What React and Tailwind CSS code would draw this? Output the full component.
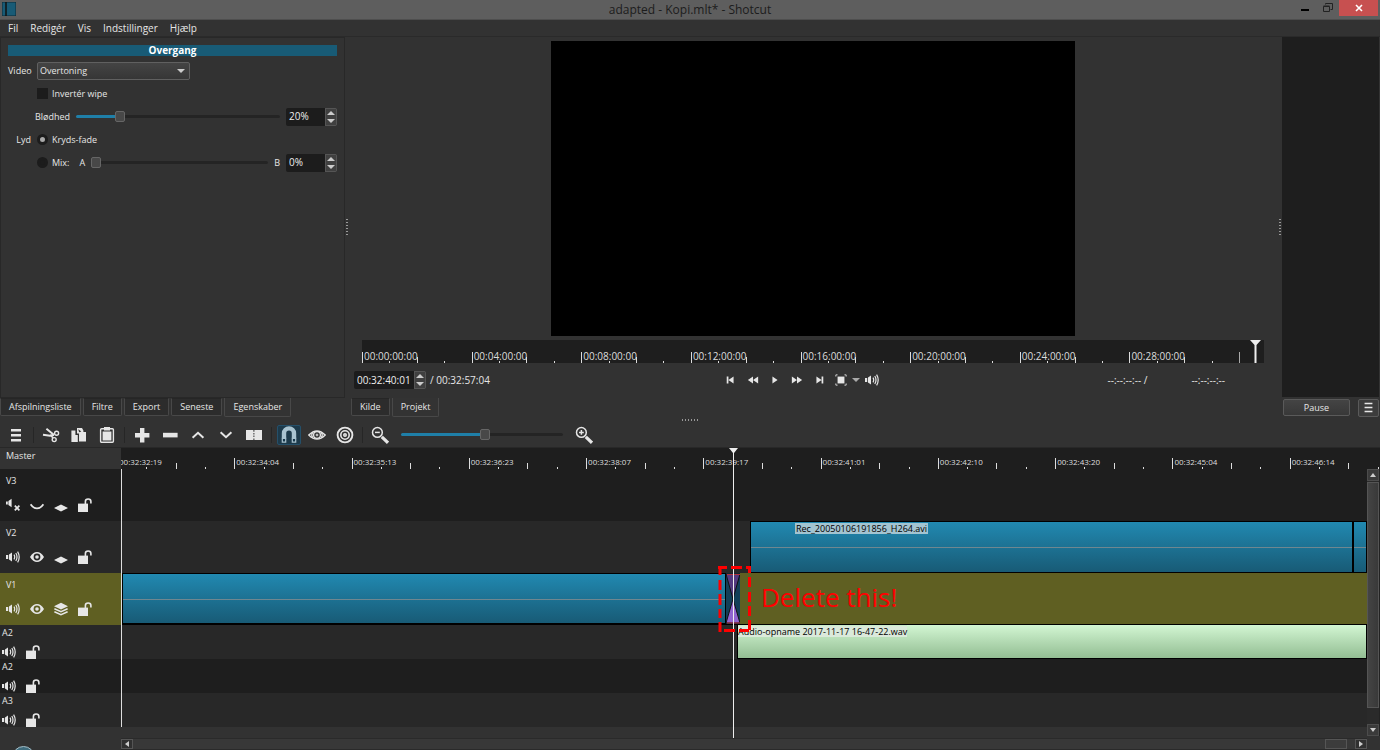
import { useState } from 'react';
import clsx from 'clsx';

const sourceMarks = ['00:00:00:00', '00:04:00:00', '00:08:00:00', '00:12:00:00', '00:16:00:00', '00:20:00:00', '00:24:00:00', '00:28:00:00'];

const timelineMarks = [
  '00:32:32:19', '00:32:34:04', '00:32:35:13', '00:32:36:23', '00:32:38:07', '00:32:39:17',
  '00:32:41:01', '00:32:42:10', '00:32:43:20', '00:32:45:04', '00:32:46:14',
];

const videoTracks = [
  { id: 'v3', name: 'V3', muted: true, hidden: true, composite: false, bg: 'bg-[#1e1e1e]' },
  { id: 'v2', name: 'V2', muted: false, hidden: false, composite: false, bg: 'bg-[#282828]' },
  { id: 'v1', name: 'V1', muted: false, hidden: false, composite: true, bg: 'bg-[#5f5f22]' },
];

const audioTracks = [
  { id: 'a1', name: 'A2', bg: 'bg-[#282828]' },
  { id: 'a2', name: 'A2', bg: 'bg-[#1e1e1e]' },
  { id: 'a3', name: 'A3', bg: 'bg-[#282828]' },
];

function Icon({ size = 14, box = 14, children }) {
  return (
    <svg width={size} height={size} viewBox={`0 0 ${box} ${box}`} fill="currentColor" aria-hidden="true" className="block shrink-0">
      {children}
    </svg>
  );
}

const stroke = { fill: 'none', stroke: 'currentColor' };

const SpeakerIcon = () => (
  <Icon>
    <path d="M0 5h2.2v4H0zM3 4.6 6 2.4v9.2L3 9.4z" />
    <path d="M8 4.6q1.4 2.4 0 4.8M9.8 3q2.4 4 0 8M11.6 1.6q3.2 5.4 0 10.8" {...stroke} strokeWidth="1.2" />
  </Icon>
);

const MutedIcon = () => (
  <Icon>
    <path d="M0 3.4h1.8v3.2H0zM2.4 3 5.6.8v8.4L2.4 7z" />
    <path d="m8.8 7.6 4.6 4.8m0-4.8-4.6 4.8" {...stroke} strokeWidth="1.7" />
  </Icon>
);

const EyeIcon = () => (
  <Icon>
    <path fillRule="evenodd" d="M0 7q3-5 7-5t7 5q-3 5-7 5T0 7zm7-3.4a3.4 3.4 0 1 0 0 6.8 3.4 3.4 0 0 0 0-6.8z" />
    <circle cx="7" cy="7" r="1.8" />
  </Icon>
);

const ClosedEyeIcon = () => (
  <Icon>
    <path d="M.6 6.2q6.4 8.4 12.8 0" {...stroke} strokeWidth="1.8" />
  </Icon>
);

const LayerIcon = () => (
  <Icon>
    <path d="M0 10 7 6.4 14 10l-7 3.6z" />
  </Icon>
);

const LayersIcon = () => (
  <Icon>
    <path d="M0 4.2 7 .8l7 3.4-7 3.4z" />
    <path d="m.4 6.8 6.6 3 6.6-3M.4 9.8l6.6 3 6.6-3" {...stroke} strokeWidth="1.5" />
  </Icon>
);

const LockIcon = () => (
  <Icon>
    <path d="M0 5.6h10V14H0z" />
    <path d="M7.4 6V3.4a2.7 2.4 0 0 1 5.5 0v2.2" {...stroke} strokeWidth="1.6" />
  </Icon>
);

const MenuIcon = ({ size = 14 }) => (
  <Icon size={size}>
    <path d="M2 1h10v2H2zM2 6h10v2H2zM2 11h10v2H2z" />
  </Icon>
);

const toolGroups = [
  [{ label: 'Menu', art: <path d="M4 3h10v2.4H4zM4 8h10v2.4H4zM4 13h10v2.4H4z" /> }],
  [
    {
      label: 'Klip',
      art: (
        <g fill="none" stroke="currentColor">
          <path d="m4.4 2.8 7.4 6M1 8.8l7 1 4-.8" strokeWidth="2" />
          <circle cx="14.6" cy="7.2" r="2" strokeWidth="1.4" />
          <circle cx="12.2" cy="13.6" r="2" strokeWidth="1.4" />
          <path d="m8.5 8.6 2.6 3.6" strokeWidth="1.6" />
        </g>
      ),
    },
    {
      label: 'Kopiér',
      art: <path fillRule="evenodd" d="M1.4 4.6h4V9h2.4v7H1.4zM7 2h5l1.4 2.4V6H16v9.6H9V7.4H7zm1.2 1.2 1 3 2.2-.6z" />,
    },
    {
      label: 'Sæt ind',
      art: (
        <g>
          <rect x="2.6" y="2.8" width="12.8" height="13.4" rx="1" {...stroke} strokeWidth="1.4" />
          <path d="M4.6 5.6h8.8v8.8H4.6zM6 1h6v3.6H6z" />
        </g>
      ),
    },
  ],
  [
    { label: 'Tilføj', art: <path d="M7 2h4.4v5h5v4.4h-5v5H7v-5H2V7h5z" /> },
    { label: 'Fjern', art: <path d="M2 6.8h14.6v4.6H2z" /> },
    { label: 'Løft', art: <path d="m3.6 11.8 5.4-5 5.4 5" {...stroke} strokeWidth="2" /> },
    { label: 'Overskriv', art: <path d="m3.6 6.2 5.4 5 5.4-5" {...stroke} strokeWidth="2" /> },
    { label: 'Split', art: <path d="M1 4h7.4v1.8h1V4H17v10H9.4v-1.6h-1V14H1zm7.4 3v1.4h1V7zm0 2.6V11h1V9.6z" fillRule="evenodd" /> },
  ],
  [
    {
      label: 'Snap',
      active: true,
      art: (
        <g>
          <path d="M4 12.5V7.4a5 5 0 0 1 10 0V12.5" {...stroke} strokeWidth="4.4" />
          <path d="M2.3 12.4h3.4v3.8H2.3zM12.3 12.4h3.4v3.8h-3.4z" fill="#16374a" stroke="currentColor" strokeWidth="1.2" />
        </g>
      ),
    },
    {
      label: 'Skrub',
      art: (
        <g fill="none" stroke="currentColor">
          <path d="M.8 9Q9 .8 17.2 9 9 17.2.8 9z" strokeWidth="1.4" />
          <circle cx="9" cy="9" r="3.4" strokeWidth="1.3" />
          <circle cx="9" cy="9" r=".9" />
          <path d="M4.6 6.6Q2.8 9 4.6 11.4M13.4 6.6q1.8 2.4 0 4.8" strokeWidth="1.2" />
        </g>
      ),
    },
    {
      label: 'Ripple',
      art: (
        <g fill="none" stroke="currentColor">
          <circle cx="9" cy="9" r="7.4" strokeWidth="1.9" />
          <circle cx="9" cy="9" r="4.2" strokeWidth="1.6" />
          <circle cx="9" cy="9" r="1.2" strokeWidth="1.6" />
        </g>
      ),
    },
  ],
  [
    {
      label: 'Zoom ud',
      art: (
        <g fill="none" stroke="currentColor">
          <circle cx="6.4" cy="6.4" r="4.9" strokeWidth="1.5" />
          <path d="M4 6.4h4.8" strokeWidth="1.5" />
          <path d="m10.8 10.8 6.2 6" strokeWidth="3.2" />
        </g>
      ),
    },
  ],
];

const zoomInArt = (
  <g fill="none" stroke="currentColor">
    <circle cx="6.4" cy="6.4" r="4.9" strokeWidth="1.5" />
    <path d="M4 6.4h4.8M6.4 4v4.8" strokeWidth="1.5" />
    <path d="m10.8 10.8 6.2 6" strokeWidth="3.2" />
  </g>
);

function ToolButton({ label, active, children }) {
  return (
    <button
      type="button"
      aria-label={label}
      className="flex h-6 w-7 items-center justify-center"
    >
      <span className={clsx('flex h-5 w-6 items-center justify-center rounded-xs', active && 'border border-[#25506a] bg-[#1d3a4b] text-[#a9c3d0]')}>
        <Icon size={18} box={18}>{children}</Icon>
      </span>
    </button>
  );
}

function Slider({ label, value, onChange, className }) {
  return (
    <input
      type="range"
      aria-label={label}
      value={value}
      onChange={(e) => onChange(Number(e.target.value))}
      style={{ backgroundImage: `linear-gradient(to right, #1f7fa8 ${value}%, #242424 ${value}%)` }}
      className={clsx(
        'h-[3px] min-w-0 appearance-none rounded-sm [&::-webkit-slider-thumb]:h-[11px] [&::-webkit-slider-thumb]:w-[10px] [&::-webkit-slider-thumb]:appearance-none [&::-webkit-slider-thumb]:rounded-xs [&::-webkit-slider-thumb]:border [&::-webkit-slider-thumb]:border-[#666] [&::-webkit-slider-thumb]:bg-[#484848]',
        className,
      )}
    />
  );
}

function SpinBox({ label, defaultValue, className }) {
  return (
    <div className={clsx('flex h-[18px] shrink-0 overflow-hidden rounded-xs bg-[#1c1c1c]', className)}>
      <input type="text" aria-label={label} defaultValue={defaultValue} className="w-full min-w-0 bg-transparent pl-[3px] text-[10px] text-[#eee]" />
      <div className="flex w-[12px] shrink-0 flex-col border border-[#555] bg-[#404040]">
        <button type="button" aria-label={`${label} op`} className="flex flex-1 items-center justify-center">
          <svg width="8" height="4" viewBox="0 0 8 4" fill="#ccc"><path d="M0 4h8L4 0z" /></svg>
        </button>
        <button type="button" aria-label={`${label} ned`} className="flex flex-1 items-center justify-center">
          <svg width="8" height="4" viewBox="0 0 8 4" fill="#ccc"><path d="M0 0h8L4 4z" /></svg>
        </button>
      </div>
    </div>
  );
}

function RulerCell({ label, small }) {
  return (
    <div className="relative grid min-w-0 flex-1 grid-cols-4 items-end">
      <i className="h-[11px] w-px bg-[#ddd]" />
      <i className="h-[2px] w-px bg-[#ddd]" />
      <i className="h-[6px] w-px bg-[#ddd]" />
      <i className="h-[2px] w-px bg-[#ddd]" />
      <span className={clsx('absolute bottom-px left-[2px] leading-3 whitespace-nowrap text-[#ddd]', small ? 'text-[8px]' : 'text-[10px]')}>{label}</span>
    </div>
  );
}

function Tabs({ items, current }) {
  return (
    <div role="tablist" className="flex h-5 items-start gap-[2px]">
      {items.map((name) => (
        <button
          key={name}
          type="button"
          role="tab"
          aria-selected={name === current}
          className={clsx(
            'rounded-b-xs border-x border-b border-[#484848] px-2 text-[9px]',
            name === current ? 'h-[19px] bg-[#333]' : 'h-[18px] border-t border-t-[#262626] bg-[#2c2c2c]',
          )}
        >
          {name}
        </button>
      ))}
    </div>
  );
}

function Grip({ vertical }) {
  return (
    <div className={clsx('flex shrink-0 items-center justify-center gap-px', vertical && 'flex-col')}>
      {[0, 1, 2, 3, 4, 5].map((n) => (
        <i key={n} className={clsx('bg-[#999]', vertical ? 'mb-px h-px w-[2px]' : 'mr-px h-[2px] w-px')} />
      ))}
    </div>
  );
}

function Properties() {
  const [softness, setSoftness] = useState(20);
  const [mix, setMix] = useState(0);

  return (
    <section className="flex w-[345px] shrink-0 flex-col">
      <div className="flex-1 border border-[#282828] px-[7px] pt-[7px]">
        <h2 className="bg-[#185b76] text-center text-[10px] leading-[11px] font-bold text-white">Overgang</h2>
        <div className="mt-[3px] text-[9px]">
          <div className="flex h-[23px] items-center">
            <label htmlFor="video" className="w-[23px] text-right">Video</label>
            <div className="relative ml-[6px]">
              <select id="video" defaultValue="Overtoning" className="block h-[18px] w-[153px] appearance-none rounded-xs border border-[#606060] bg-linear-to-b from-[#444] to-[#363636] px-[2px]">
                <option>Overtoning</option>
              </select>
              <svg width="8" height="4" viewBox="0 0 8 4" fill="#ccc" className="pointer-events-none absolute top-[7px] right-[5px]"><path d="M0 0h8L4 4z" /></svg>
            </div>
          </div>
          <label className="flex h-[23px] items-center gap-1 pl-[29px]">
            <input type="checkbox" className="size-[11px] appearance-none bg-[#1c1c1c] checked:bg-[#888]" />
            Invertér wipe
          </label>
          <div className="flex h-[23px] items-center gap-[6px]">
            <span className="w-[62px] text-right">Blødhed</span>
            <Slider label="Blødhed" value={softness} onChange={setSoftness} className="flex-1" />
            <SpinBox label="Blødhed procent" defaultValue="20%" className="w-[51px]" />
          </div>
          <div className="flex h-[23px] items-center">
            <span className="w-[23px] text-right">Lyd</span>
            <label className="ml-[6px] flex items-center gap-1">
              <input type="radio" name="lyd" defaultChecked className="size-[11px] appearance-none rounded-full border-[3px] border-[#1c1c1c] bg-[#1c1c1c] checked:bg-[#aaa]" />
              Kryds-fade
            </label>
          </div>
          <div className="flex h-[23px] items-center gap-[6px] pl-[29px]">
            <label className="flex items-center gap-1 pr-1">
              <input type="radio" name="lyd" className="size-[11px] appearance-none rounded-full border-[3px] border-[#1c1c1c] bg-[#1c1c1c] checked:bg-[#aaa]" />
              Mix:
            </label>
            <span>A</span>
            <Slider label="Mix" value={mix} onChange={setMix} className="flex-1" />
            <span>B</span>
            <SpinBox label="Mix procent" defaultValue="0%" className="w-[51px]" />
          </div>
        </div>
      </div>
      <Tabs items={['Afspilningsliste', 'Filtre', 'Export', 'Seneste', 'Egenskaber']} current="Egenskaber" />
    </section>
  );
}

const transport = [
  { label: 'Forrige', d: 'M2 3h2v8H2zM10 3v8L4 7z' },
  { label: 'Spol tilbage', d: 'M7 3v8L1 7zM13 3v8L7 7z' },
  { label: 'Afspil', d: 'M4 3v8l6-4z' },
  { label: 'Spol frem', d: 'M1 3v8l6-4zM7 3v8l6-4z' },
  { label: 'Næste', d: 'M4 3v8l6-4zM10 3h2v8h-2z' },
];

function Player() {
  return (
    <section className="flex min-w-0 flex-1 flex-col pt-1">
      <div className="flex min-h-0 flex-1 justify-center">
        <div className="aspect-video h-full bg-black" />
      </div>
      <div className="relative mx-[14px] mt-1 flex h-[23px] bg-[#1e1e1e]">
        {sourceMarks.map((m) => <RulerCell key={m} label={m} />)}
        <div className="flex w-[25px] items-end">
          <i className="h-[11px] w-px bg-[#aaa]" />
        </div>
        <svg width="11" height="23" viewBox="0 0 11 23" fill="#eee" className="absolute top-0 right-[3px]"><path d="M0 0h11L6.500 5v18h-2V5z" /></svg>
      </div>
      {/* equal outer columns keep the transport buttons centred */}
      <div className="mt-2 mr-[33px] ml-[6px] grid h-[18px] grid-cols-[1fr_auto_1fr] items-center text-[10px]">
        <div className="flex items-center gap-1">
          <SpinBox label="Position" defaultValue="00:32:40:01" className="w-[72px]" />
          <span>/ 00:32:57:04</span>
        </div>
        <div className="flex items-center">
          {transport.map((t) => (
            <button key={t.label} type="button" aria-label={t.label} className="flex w-[22px] justify-center">
              <Icon size={12}><path d={t.d} /></Icon>
            </button>
          ))}
          <button type="button" aria-label="Zoom" className="flex w-[22px] justify-center">
            <Icon size={12}>
              <path d="M3 3h8v8H3z" />
              <path d="M1 3V1h2M11 1h2v2M13 11v2h-2M3 13H1v-2" {...stroke} />
            </Icon>
          </button>
          <svg width="8" height="4" viewBox="0 0 8 4" fill="#aaa"><path d="M0 0h8L4 4z" /></svg>
          <button type="button" aria-label="Lydstyrke" className="ml-[5px]"><SpeakerIcon /></button>
        </div>
        <div className="flex justify-end gap-[44px] pr-5">
          <span>--:--:--:-- /</span>
          <span>--:--:--:--</span>
        </div>
      </div>
      <div className="mt-[9px] ml-[3px]">
        <Tabs items={['Kilde', 'Projekt']} current="Projekt" />
      </div>
    </section>
  );
}

function TrackButtons({ children }) {
  return (
    <div className="flex gap-[10px]">
      {children}
    </div>
  );
}

function TrackHeads() {
  return (
    <div className="flex w-[121px] shrink-0 flex-col overflow-hidden text-[9px] leading-3">
      <div className="h-[21px] bg-[#333] pt-[2px] pl-[6px]">Master</div>
      {videoTracks.map((t) => (
        <div key={t.id} className={clsx('flex h-[52px] flex-col justify-between pt-[6px] pb-[9px] pl-[6px]', t.bg)}>
          <span>{t.name}</span>
          <TrackButtons>
            <button type="button" aria-label="Lydløs">{t.muted ? <MutedIcon /> : <SpeakerIcon />}</button>
            <button type="button" aria-label="Skjul">{t.hidden ? <ClosedEyeIcon /> : <EyeIcon />}</button>
            <button type="button" aria-label="Sammensæt">{t.composite ? <LayersIcon /> : <LayerIcon />}</button>
            <button type="button" aria-label="Lås"><LockIcon /></button>
          </TrackButtons>
        </div>
      ))}
      {audioTracks.map((t) => (
        <div key={t.id} className={clsx('flex h-[34px] flex-col justify-between pt-[2px] pl-[2px]', t.bg)}>
          <span>{t.name}</span>
          <TrackButtons>
            <button type="button" aria-label="Lydløs"><SpeakerIcon /></button>
            <button type="button" aria-label="Lås"><LockIcon /></button>
          </TrackButtons>
        </div>
      ))}
      <div className="relative flex-1">
        <div className="absolute top-[19px] left-3 size-[23px] rounded-full border border-[#a5bcc5] bg-[#3f6c7d]" />
      </div>
    </div>
  );
}

function VideoClip({ label, className }) {
  return (
    <div className={clsx('relative border border-black bg-linear-to-b from-[#2189b1] to-[#185b76]', className)}>
      <div className="absolute inset-x-0 top-1/2 h-px bg-[#6f8790]" />
      {label && <span className="absolute top-px left-[44px] bg-[#a3c4d1] px-px text-[9px] leading-[11px] whitespace-nowrap text-black">{label}</span>}
    </div>
  );
}

function Lanes() {
  return (
    <div className="relative min-w-0 flex-1">
      <div className="h-[21px] overflow-hidden bg-[#1e1e1e]">
        <div className="-mr-[27px] -ml-1 flex h-full">
          {timelineMarks.map((m) => <RulerCell key={m} label={m} small />)}
        </div>
      </div>
      <div className="flex">
        <div className="min-w-0 flex-1 border-l border-[#ddd]">
          <div className="h-[52px] bg-[#1e1e1e]" />
          <div className="flex h-[52px] bg-[#282828] pl-[628px]">
            <VideoClip label="Rec_20050106191856_H264.avi" className="flex-1" />
            <VideoClip className="w-[14px]" />
          </div>
          <div className="flex h-[52px] border-b border-black bg-[#5f5f22]">
            <VideoClip className="w-[604px]" />
            <svg width="14" height="51" viewBox="0 0 14 51">
              <path d="M0 0h14v51H0z" fill="#123f58" />
              <path d="M0 1h14L7 26z" fill="#53397f" stroke="#111" />
              <path d="M0 50h14L7 26z" fill="#8f63cf" stroke="#111" />
              <path d="M1 1.500h13M1 50h13" stroke="#b3303a" />
            </svg>
          </div>
          <div className="flex h-[34px] bg-[#282828] pl-[615px]">
            <div className="flex-1 border border-t-0 border-black bg-linear-to-b from-[#d3f6d3] to-[#93be93]">
              <span className="block w-fit border-t border-[#c9ecc9] bg-[#dbe9db] text-[9px] leading-[11px] whitespace-nowrap text-black">Audio-opname 2017-11-17 16-47-22.wav</span>
            </div>
          </div>
          <div className="h-[34px] bg-[#1e1e1e]" />
          <div className="h-[34px] bg-[#282828]" />
        </div>
        <div className="-mb-[9px] flex w-[13px] flex-col border-r border-[#222] bg-[#2a2a2a]">
          <button type="button" aria-label="Rul op" className="flex h-3 items-center justify-center border border-[#4c4c4c] bg-[#3a3a3a]">
            <svg width="6" height="4" viewBox="0 0 6 4" fill="#ccc"><path d="M0 4h6L3 0z" /></svg>
          </button>
          <div className="mt-px mb-4 flex-1 border border-[#555] bg-linear-to-r from-[#444] to-[#393939]" />
          <button type="button" aria-label="Rul ned" className="flex h-3 items-center justify-center border border-[#4c4c4c] bg-[#3a3a3a]">
            <svg width="6" height="4" viewBox="0 0 6 4" fill="#ccc"><path d="M0 0h6L3 4z" /></svg>
          </button>
        </div>
      </div>
      <div className="mt-[11px] mr-[13px] flex h-3 border-y border-[#2a2a2a] bg-[#383838]">
        <button type="button" aria-label="Rul til venstre" className="flex w-3 items-center justify-center border border-[#555] bg-[#303030]">
          <svg width="4" height="6" viewBox="0 0 4 6" fill="#ccc"><path d="M4 0v6L0 3z" /></svg>
        </button>
        <div className="mr-2 ml-auto w-[22px] border border-[#555] bg-[#3c3c3c]" />
        <button type="button" aria-label="Rul til højre" className="flex w-3 items-center justify-center border border-[#555] bg-[#303030]">
          <svg width="4" height="6" viewBox="0 0 4 6" fill="#ccc"><path d="M0 0v6l4-3z" /></svg>
        </button>
      </div>
      {/* playhead */}
      <svg width="9" height="290" viewBox="0 0 9 290" fill="#eee" className="absolute top-0 left-[608px]"><path d="M0 0h9L5 5v285H4V5z" /></svg>
      {/* marked transition */}
      <svg width="33" height="66" viewBox="0 0 33 66" className="absolute top-[118px] left-[597px]">
        <path d="M0 1.500h9M13 1.500h11M28 1.500h5M6 64.500h11M21 64.500h10" stroke="#f00" strokeWidth="3" />
        <path d="M2 0v9M2 14v10M2 28v11M2 43v9M2 56v10M31.500 1v6M31.500 11v10M31.500 26v10M31.500 40v10M31.500 54v10" stroke="#f00" strokeWidth="3" />
      </svg>
      <p className="absolute top-[131px] left-[640px] text-[26px] leading-9 whitespace-nowrap text-[#f00]">Delete this!</p>
    </div>
  );
}

export default function App() {
  const [zoom, setZoom] = useState(52);

  return (
    <div className="flex h-screen flex-col overflow-hidden bg-[#323232] font-['Open_Sans',sans-serif] text-[#e6e6e6]">
      <header className="flex h-5 shrink-0 items-start justify-between border-b border-[#4e4e4e] bg-[#5e5e5e] text-black">
        <div className="flex flex-1 pt-[2px] pl-[2px]">
          <svg width="14" height="14" viewBox="0 0 14 14"><path d="M0 0h14v14H0z" fill="#185b76" stroke="#0d2a37" /><path d="M4 0v14" stroke="#111" strokeWidth="1.500" /></svg>
        </div>
        <h1 className="text-[12px] leading-5 text-[#1c1c1c]">adapted - Kopi.mlt* - Shotcut</h1>
        <div className="flex flex-1 justify-end pr-[2px]">
          <button type="button" aria-label="Minimer" className="flex h-4 w-[22px] items-center justify-center">
            <svg width="8" height="8" viewBox="0 0 8 8"><path d="M0 5h8v2H0z" /></svg>
          </button>
          <button type="button" aria-label="Gendan" className="flex h-4 w-[23px] items-center justify-center">
            <svg width="10" height="10" viewBox="0 0 10 10" fill="none" stroke="#222"><path d="M.5 3.500h6v5h-6zM.5 3h6M2.500 1.500V.5h7v6h-2" /></svg>
          </button>
          <button type="button" aria-label="Luk" className="flex h-4 w-[39px] items-center justify-center bg-[#c75050]">
            <svg width="8" height="8" viewBox="0 0 8 8"><path d="m1 1 6 6m0-6L1 7" stroke="#fff" strokeWidth="1.600" /></svg>
          </button>
        </div>
      </header>

      <nav className="flex h-[17px] shrink-0 items-center gap-3 border-b border-[#2a2a2a] px-2 text-[10px]">
        {['Fil', 'Redigér', 'Vis', 'Indstillinger', 'Hjælp'].map((item) => (
          <button key={item} type="button">{item}</button>
        ))}
      </nav>

      <div className="flex min-h-0 flex-1">
        <Properties />
        <div className="flex w-[3px] shrink-0 justify-center"><Grip vertical /></div>
        <Player />
        <div className="flex w-1 shrink-0 justify-center"><Grip vertical /></div>
        <aside className="flex w-[98px] shrink-0 flex-col">
          <div className="flex-1 border-r border-[#333] bg-[#1e1e1e]" />
          <div className="flex h-[21px] items-center justify-between pr-px pl-px text-[9px]">
            <button type="button" className="h-[17px] w-[67px] rounded-xs border border-[#5a5a5a] bg-linear-to-b from-[#444] to-[#383838]">Pause</button>
            <button type="button" aria-label="Jobmenu" className="flex h-[18px] w-[21px] items-center justify-center rounded-xs border border-[#5a5a5a] bg-[#3c3c3c]"><MenuIcon size={11} /></button>
          </div>
        </aside>
      </div>

      <div className="flex h-[4px] shrink-0 items-center justify-center"><Grip /></div>
      <div className="flex h-[26px] shrink-0 items-center border-b border-[#282828] pl-[2px]">
        {toolGroups.map((group, i) => (
          <div key={group[0].label} className="flex items-center">
            {i > 0 && <i className="mx-[3px] h-4 w-px bg-[#262626]" />}
            {group.map((t) => (
              <ToolButton key={t.label} label={t.label} active={t.active}>{t.art}</ToolButton>
            ))}
          </div>
        ))}
        <Slider label="Tidslinje zoom" value={zoom} onChange={setZoom} className="mx-[7px] w-[162px]" />
        <ToolButton label="Zoom ind">{zoomInArt}</ToolButton>
      </div>

      <div className="flex shrink-0">
        <TrackHeads />
        <Lanes />
      </div>
    </div>
  );
}
